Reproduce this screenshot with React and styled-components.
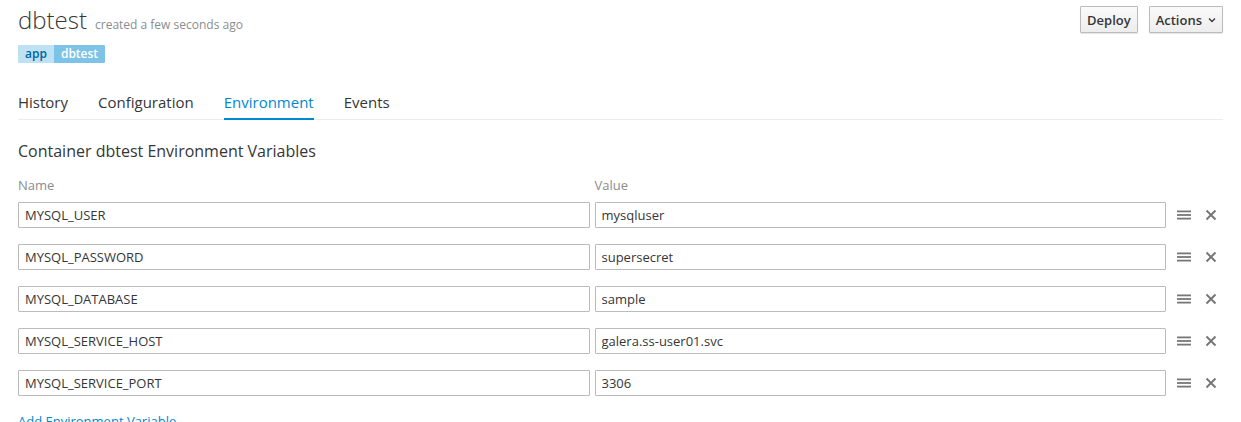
import React from "react";
import styled, { createGlobalStyle } from "styled-components";

const GlobalStyle = createGlobalStyle`
  body {
    margin: 0;
    background: #fff;
    font-family: "Open Sans", "Noto Sans", sans-serif;
    color: #363636;
  }
`;

const Page = styled.div`
  padding: 0 18px;
`;

const Header = styled.div`
  display: flex;
  justify-content: space-between;
  align-items: flex-start;
`;

const TitleRow = styled.div`
  display: flex;
  align-items: baseline;
  gap: 8px;
  margin-top: 2px;
`;

const Title = styled.h1`
  margin: 0;
  font-size: 24px;
  font-weight: 300;
  line-height: 36px;
  color: #363636;
`;

const Sub = styled.span`
  font-size: 12px;
  color: #8b8d8f;
`;

const Labels = styled.div`
  display: flex;
  margin-top: 7px;
`;

const Label = styled.span`
  font-size: 12px;
  font-weight: 600;
  line-height: 18px;
  padding: 0 7px;
  background: ${(p) => (p.$value ? "#7dc3e8" : "#bee1f4")};
  color: ${(p) => (p.$value ? "#fff" : "#00659c")};
  border-radius: ${(p) => (p.$value ? "0 1px 1px 0" : "1px 0 0 1px")};
`;

const Buttons = styled.div`
  display: flex;
  gap: 11px;
  margin-top: 6px;
`;

const Button = styled.button`
  font-family: inherit;
  font-size: 13px;
  font-weight: 600;
  color: #363636;
  height: 27px;
  padding: 0 6px;
  background: linear-gradient(#fafafa, #ededed);
  border: 1px solid #bbb;
  border-radius: 1px;
  box-shadow: 0 1px 1px rgba(3, 3, 3, 0.1);
  display: flex;
  align-items: center;
  gap: 6px;
`;

const Tabs = styled.div`
  display: flex;
  gap: 30px;
  margin-top: 28px;
  border-bottom: 1px solid #ececec;
`;

const Tab = styled.div`
  font-size: 15px;
  line-height: 22px;
  padding-bottom: 5px;
  color: ${(p) => (p.$active ? "#0088ce" : "#363636")};
  border-bottom: 2px solid ${(p) => (p.$active ? "#0088ce" : "transparent")};
  margin-bottom: -1px;
`;

const Section = styled.h3`
  margin: 20px 0 0;
  font-size: 16px;
  font-weight: 400;
  line-height: 22px;
`;

const Grid = styled.div`
  display: grid;
  grid-template-columns: 1fr 1fr 52px;
  column-gap: 5px;
  margin-top: 14px;
`;

const ColLabel = styled.div`
  font-size: 13px;
  color: #8b8d8f;
  line-height: 18px;
  margin-bottom: 8px;
`;

const Input = styled.input`
  font-family: inherit;
  font-size: 13px;
  color: #363636;
  height: 26px;
  box-sizing: border-box;
  border: 1px solid #bbb;
  border-radius: 1px;
  padding: 0 6px;
  margin-bottom: 16px;
  min-width: 0;
  outline: none;
`;

const Actions = styled.div`
  display: flex;
  align-items: center;
  gap: 14px;
  padding-left: 6px;
  height: 26px;
`;

const AddLink = styled.a`
  display: block;
  font-size: 13px;
  color: #0088ce;
  text-decoration: none;
`;

const Bars = () => (
  <svg width="14" height="12" viewBox="0 0 14 12">
    <rect x="0" y="1.5" width="14" height="1.8" fill="#777" />
    <rect x="0" y="5.1" width="14" height="1.8" fill="#777" />
    <rect x="0" y="8.7" width="14" height="1.8" fill="#777" />
  </svg>
);

const Close = () => (
  <svg width="12" height="12" viewBox="0 0 12 12">
    <path d="M1.5 1.5 L10.5 10.5 M10.5 1.5 L1.5 10.5" stroke="#777" strokeWidth="2" />
  </svg>
);

const Caret = () => (
  <svg width="8" height="6" viewBox="0 0 8 6">
    <path d="M1 1.5 L4 4.5 L7 1.5" stroke="#363636" strokeWidth="1.3" fill="none" />
  </svg>
);

const vars = [
  ["MYSQL_USER", "mysqluser"],
  ["MYSQL_PASSWORD", "supersecret"],
  ["MYSQL_DATABASE", "sample"],
  ["MYSQL_SERVICE_HOST", "galera.ss-user01.svc"],
  ["MYSQL_SERVICE_PORT", "3306"],
];

export default function App() {
  return (
    <Page>
      <GlobalStyle />
      <Header>
        <div>
          <TitleRow>
            <Title>dbtest</Title>
            <Sub>created a few seconds ago</Sub>
          </TitleRow>
          <Labels>
            <Label>app</Label>
            <Label $value>dbtest</Label>
          </Labels>
        </div>
        <Buttons>
          <Button>Deploy</Button>
          <Button>
            Actions <Caret />
          </Button>
        </Buttons>
      </Header>
      <Tabs>
        <Tab>History</Tab>
        <Tab>Configuration</Tab>
        <Tab $active>Environment</Tab>
        <Tab>Events</Tab>
      </Tabs>
      <Section>Container dbtest Environment Variables</Section>
      <Grid>
        <ColLabel>Name</ColLabel>
        <ColLabel>Value</ColLabel>
        <div />
        {vars.map(([name, value]) => (
          <React.Fragment key={name}>
            <Input defaultValue={name} />
            <Input defaultValue={value} />
            <Actions>
              <Bars />
              <Close />
            </Actions>
          </React.Fragment>
        ))}
      </Grid>
      <AddLink href="#">Add Environment Variable</AddLink>
    </Page>
  );
}
